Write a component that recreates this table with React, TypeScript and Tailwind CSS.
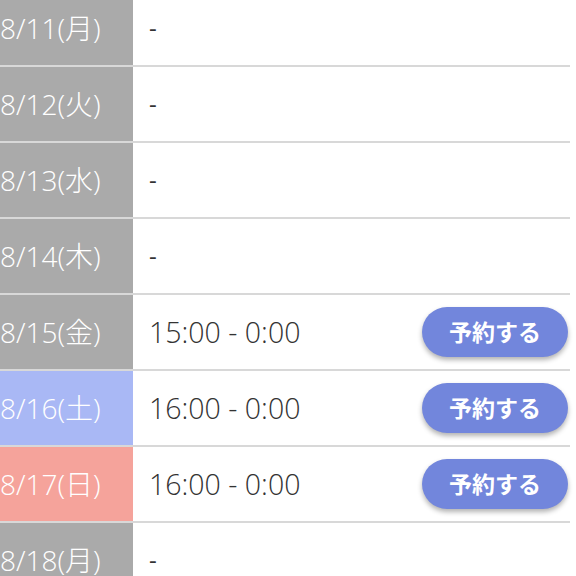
import React from "react";

type Row = { date: string; time?: string; kind: "gray" | "blue" | "pink" };

const rows: Row[] = [
  { date: "8/11(月)", kind: "gray" },
  { date: "8/12(火)", kind: "gray" },
  { date: "8/13(水)", kind: "gray" },
  { date: "8/14(木)", kind: "gray" },
  { date: "8/15(金)", time: "15:00 - 0:00", kind: "gray" },
  { date: "8/16(土)", time: "16:00 - 0:00", kind: "blue" },
  { date: "8/17(日)", time: "16:00 - 0:00", kind: "pink" },
  { date: "8/18(月)", kind: "gray" },
];

const bg: Record<Row["kind"], string> = {
  gray: "bg-[#aaaaaa]",
  blue: "bg-[#a9b8f5]",
  pink: "bg-[#f5a39b]",
};

export default function App() {
  return (
    <div
      className="w-[576px] h-[576px] overflow-hidden bg-white"
      style={{ fontFamily: '"Open Sans", "Noto Sans CJK JP", sans-serif' }}
    >
      <div className="w-[570px] -mt-[9px]">
        {rows.map((r) => (
          <div key={r.date} className="flex h-[76px] border-b-2 border-[#d8d8d8]">
            <div
              className={`w-[133px] shrink-0 flex items-center text-white text-[28px] font-light whitespace-nowrap ${bg[r.kind]}`}
            >
              {r.date}
            </div>
            <div className="flex-1 flex items-center justify-between pl-[16px] pr-[1px]">
              {r.time ? (
                <>
                  <span className="text-[28.5px] text-[#333333] font-light">{r.time}</span>
                  <button className="mr-[1px] w-[146px] h-[50px] rounded-full bg-[#7286dc] text-white text-[23px] font-bold shadow-[0_3px_5px_rgba(0,0,0,0.3)]">
                    予約する
                  </button>
                </>
              ) : (
                <span className="text-[24px] text-[#333333]">-</span>
              )}
            </div>
          </div>
        ))}
      </div>
    </div>
  );
}
